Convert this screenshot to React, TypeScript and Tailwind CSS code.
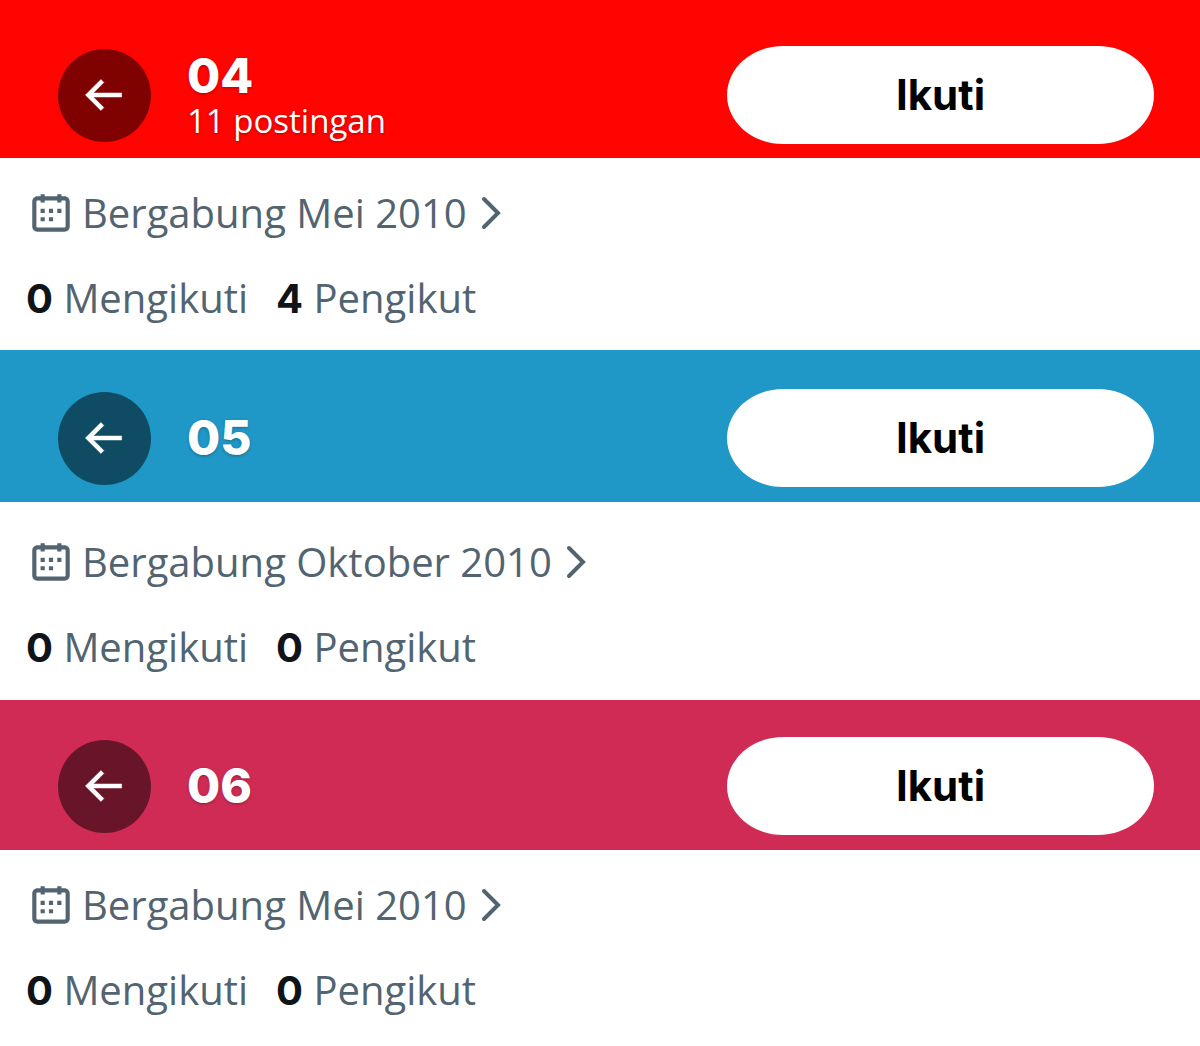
type Profile = {
  name: string;
  posts?: string;
  joined: string;
  following: number;
  followers: number;
  headerCss: string;
  bodyCss: string;
};

const profiles: Profile[] = [
  {
    name: "04",
    posts: "11 postingan",
    joined: "Bergabung Mei 2010",
    following: 0,
    followers: 4,
    headerCss: "bg-[#ff0400] pt-[46px] pb-[14px]",
    bodyCss: "pt-[31px] pb-7",
  },
  {
    name: "05",
    joined: "Bergabung Oktober 2010",
    following: 0,
    followers: 0,
    headerCss: "bg-[#1f98c8] pt-[39px] pb-[15px]",
    bodyCss: "pt-9 pb-[29px]",
  },
  {
    name: "06",
    joined: "Bergabung Mei 2010",
    following: 0,
    followers: 0,
    headerCss: "bg-[#d02b55] pt-[37px] pb-[15px]",
    bodyCss: "pt-[31px] pb-8",
  },
];

export default function App() {
  return (
    <main className="min-h-screen w-full bg-white font-['Open_Sans',sans-serif]">
      {profiles.map((profile) => (
        <section key={profile.name}>
          <ProfileHeader profile={profile} />
          <ProfileInfo profile={profile} />
        </section>
      ))}
    </main>
  );
}

function ProfileHeader({ profile }: { profile: Profile }) {
  return (
    <header
      className={`flex items-center pl-[58px] pr-[46px] ${profile.headerCss}`}
    >
      <button
        type="button"
        aria-label="Kembali"
        className="flex size-[93px] shrink-0 items-center justify-center rounded-full bg-black/50 text-white"
      >
        <ArrowIcon />
      </button>
      <div className="ml-9 flex flex-col text-white">
        <h2 className="font-['Inter',sans-serif] text-[48px] leading-[52px] font-extrabold text-shadow-[0_1px_3px_rgb(0_0_0/0.3)]">
          {profile.name}
        </h2>
        {profile.posts && (
          <p className="text-[33px] leading-[38px] whitespace-nowrap text-shadow-[0_1px_3px_rgb(0_0_0/0.3)]">
            {profile.posts}
          </p>
        )}
      </div>
      <button
        type="button"
        className="ml-auto h-[98px] w-[427px] rounded-[56px/49px] bg-white font-['Inter',sans-serif] text-[42px] leading-[48px] font-bold text-black"
      >
        Ikuti
      </button>
    </header>
  );
}

function ProfileInfo({ profile }: { profile: Profile }) {
  return (
    <div
      className={`flex flex-col items-start gap-[37px] px-[26px] text-[40px] leading-[48px] text-[#536471] ${profile.bodyCss}`}
    >
      <a href="#" className="flex h-12 items-center whitespace-nowrap">
        <CalendarIcon />
        <span className="ml-1.5">{profile.joined}</span>
        <ChevronIcon />
      </a>
      <div className="flex gap-7 whitespace-nowrap">
        <Stat count={profile.following} label="Mengikuti" />
        <Stat count={profile.followers} label="Pengikut" />
      </div>
    </div>
  );
}

function Stat({ count, label }: { count: number; label: string }) {
  return (
    <a href="#">
      <span className="font-['Inter',sans-serif] leading-none font-bold text-[#0f1419]">
        {count}
      </span>{" "}
      {label}
    </a>
  );
}

function ArrowIcon() {
  return (
    <svg
      viewBox="1 0 24 24"
      className="size-[50px]"
      fill="currentColor"
      stroke="currentColor"
      strokeWidth="0.2"
    >
      <path d="M7.414 13l5.043 5.04-1.414 1.42L3.586 12l7.457-7.46 1.414 1.42L7.414 11H21v2H7.414z" />
    </svg>
  );
}

function CalendarIcon() {
  return (
    <svg viewBox="0 0 24 24" className="size-[50px] shrink-0" fill="currentColor">
      <path d="M7 4V3h2v1h6V3h2v1h1.5C19.89 4 21 5.12 21 6.5v12c0 1.38-1.11 2.5-2.5 2.5h-13C4.12 21 3 19.88 3 18.5v-12C3 5.12 4.12 4 5.5 4H7zm0 2H5.5c-.27 0-.5.22-.5.5v12c0 .28.23.5.5.5h13c.28 0 .5-.22.5-.5v-12c0-.28-.22-.5-.5-.5H17v1h-2V6H9v1H7V6zm0 6h2v-2H7v2zm0 4h2v-2H7v2zm4-4h2v-2h-2v2zm0 4h2v-2h-2v2zm4-4h2v-2h-2v2z" />
    </svg>
  );
}

function ChevronIcon() {
  return (
    <svg
      viewBox="0 0 20 34"
      className="ml-3.5 h-[34px] w-5 shrink-0"
      fill="none"
      stroke="currentColor"
      strokeWidth="4"
      strokeLinecap="round"
    >
      <path d="M3 3L17 17L3 31" />
    </svg>
  );
}
